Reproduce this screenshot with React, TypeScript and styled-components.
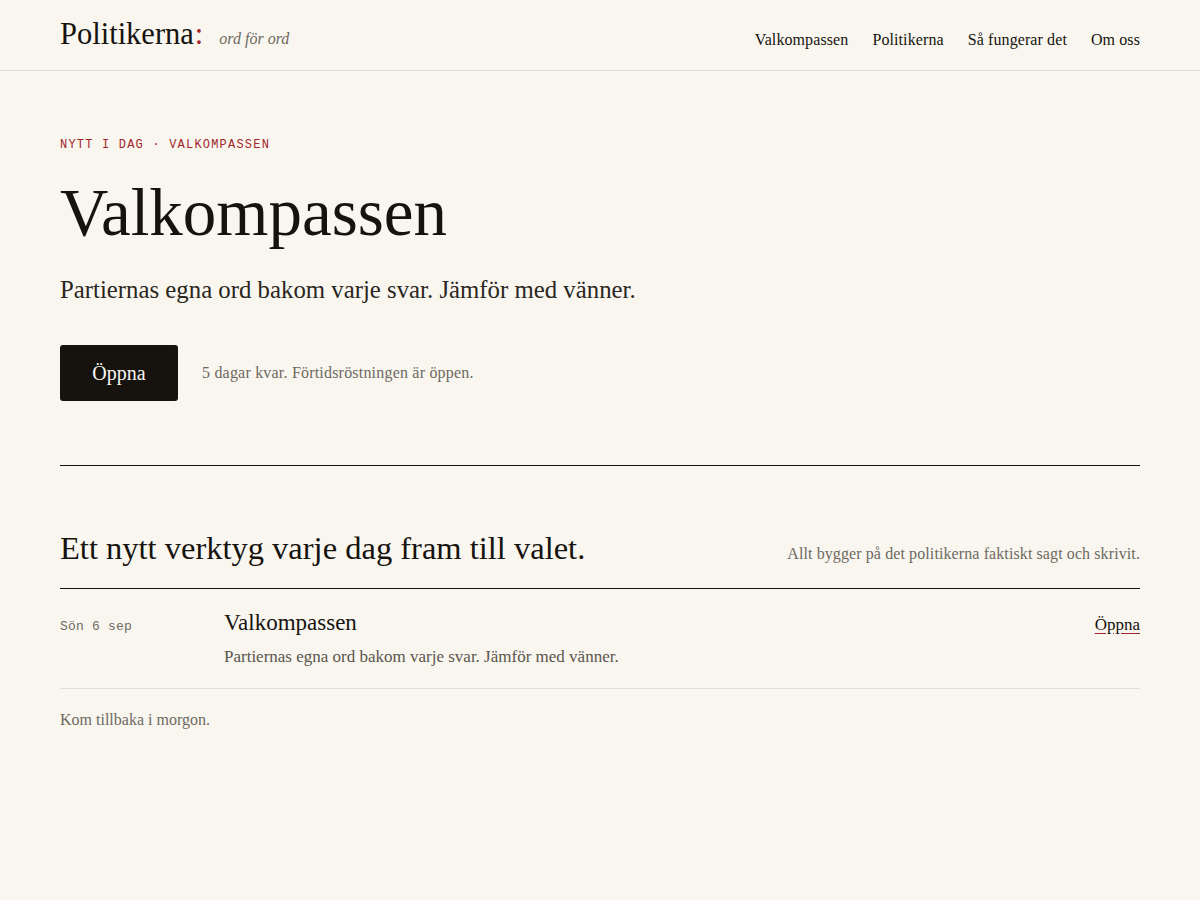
import React from 'react';
import styled, { createGlobalStyle } from 'styled-components';

const serif = `'Liberation Serif', 'Times New Roman', serif`;
const mono = `'Liberation Mono', 'DejaVu Sans Mono', monospace`;

const GlobalStyle = createGlobalStyle`
  * { box-sizing: border-box; }
  html, body {
    margin: 0;
    padding: 0;
    background: #f9f6f0;
    color: #16130e;
    font-family: ${serif};
  }
`;

const tools = [
  {
    date: 'Sön 6 sep',
    title: 'Valkompassen',
    desc: 'Partiernas egna ord bakom varje svar. Jämför med vänner.',
  },
];

const App = () => {
  return (
    <>
      <GlobalStyle />
      <Header>
        <HeaderInner>
          <Brand>
            <Logo>
              Politikerna<Colon>:</Colon>
            </Logo>
            <Tagline>ord för ord</Tagline>
          </Brand>
          <Nav>
            <NavLink href="#">Valkompassen</NavLink>
            <NavLink href="#">Politikerna</NavLink>
            <NavLink href="#">Så fungerar det</NavLink>
            <NavLink href="#">Om oss</NavLink>
          </Nav>
        </HeaderInner>
      </Header>

      <Main>
        <Hero>
          <Eyebrow>Nytt i dag · Valkompassen</Eyebrow>
          <Title>Valkompassen</Title>
          <Lead>Partiernas egna ord bakom varje svar. Jämför med vänner.</Lead>
          <Actions>
            <PrimaryButton>Öppna</PrimaryButton>
            <Note>5 dagar kvar. Förtidsröstningen är öppen.</Note>
          </Actions>
        </Hero>

        <Section>
          <SectionHead>
            <SectionTitle>Ett nytt verktyg varje dag fram till valet.</SectionTitle>
            <SectionAside>Allt bygger på det politikerna faktiskt sagt och skrivit.</SectionAside>
          </SectionHead>
          <List>
            {tools.map((tool) => (
              <Row key={tool.title}>
                <RowDate>{tool.date}</RowDate>
                <RowBody>
                  <RowTitle>{tool.title}</RowTitle>
                  <RowDesc>{tool.desc}</RowDesc>
                </RowBody>
                <RowLink href="#">Öppna</RowLink>
              </Row>
            ))}
          </List>
          <Footnote>Kom tillbaka i morgon.</Footnote>
        </Section>
      </Main>
    </>
  );
};

export default App;

const Header = styled.header`
  border-bottom: 1px solid #e2ddd3;
`;

const HeaderInner = styled.div`
  max-width: 1080px;
  height: 70px;
  margin: 0 auto;
  display: flex;
  align-items: center;
  justify-content: space-between;
`;

const Brand = styled.div`
  display: flex;
  align-items: baseline;
  gap: 16px;
  margin-top: -1px;
`;

const Logo = styled.span`
  font-size: 30.5px;
  color: #16130e;
`;

const Colon = styled.span`
  color: #a3262a;
  margin-left: 1px;
`;

const Tagline = styled.span`
  font-size: 16px;
  font-style: italic;
  color: #6e6960;
`;

const Nav = styled.nav`
  display: flex;
  gap: 24px;
  margin-top: 10px;
`;

const NavLink = styled.a`
  font-size: 16px;
  letter-spacing: 0.1px;
  color: #16130e;
  text-decoration: none;
`;

const Main = styled.main`
  max-width: 1080px;
  margin: 0 auto;
`;

const Hero = styled.section`
  padding: 66px 0 64px;
  border-bottom: 1px solid #16130e;
`;

const Eyebrow = styled.div`
  font-family: ${mono};
  font-size: 12px;
  letter-spacing: 0.1em;
  text-transform: uppercase;
  color: #a3262a;
  line-height: 16px;
`;

const Title = styled.h1`
  margin: 23px 0 0;
  font-weight: 400;
  font-size: 67px;
  line-height: 72px;
  color: #16130e;
`;

const Lead = styled.p`
  margin: 26px 0 0;
  font-size: 24.8px;
  line-height: 32px;
  color: #2a2620;
`;

const Actions = styled.div`
  margin-top: 39px;
  display: flex;
  align-items: center;
  gap: 24px;
`;

const PrimaryButton = styled.button`
  width: 118px;
  height: 56px;
  border: none;
  border-radius: 3px;
  background: #16130e;
  color: #f9f6f0;
  font-family: ${serif};
  font-size: 20px;
  cursor: pointer;
`;

const Note = styled.span`
  font-size: 16px;
  letter-spacing: 0.2px;
  color: #6e6960;
`;

const Section = styled.section`
  padding-top: 62px;
`;

const SectionHead = styled.div`
  display: flex;
  align-items: baseline;
  justify-content: space-between;
  padding-bottom: 20px;
  border-bottom: 1px solid #16130e;
`;

const SectionTitle = styled.h2`
  margin: 0;
  font-weight: 400;
  font-size: 32.5px;
  line-height: 40px;
  color: #16130e;
`;

const SectionAside = styled.span`
  font-size: 16px;
  letter-spacing: 0.1px;
  color: #6e6960;
`;

const List = styled.div``;

const Row = styled.div`
  display: grid;
  grid-template-columns: 164px 1fr auto;
  align-items: baseline;
  padding: 20px 0 20px;
  border-bottom: 1px solid #e2ddd3;
`;

const RowDate = styled.span`
  font-family: ${mono};
  font-size: 13px;
  letter-spacing: 0.2px;
  color: #6e6960;
`;

const RowBody = styled.div`
  display: flex;
  flex-direction: column;
  gap: 9px;
`;

const RowTitle = styled.span`
  font-size: 23px;
  line-height: 28px;
  color: #16130e;
`;

const RowDesc = styled.span`
  font-size: 17px;
  line-height: 22px;
  color: #5a554c;
`;

const RowLink = styled.a`
  font-size: 17px;
  color: #16130e;
  text-decoration: underline;
  text-decoration-color: #a3262a;
  text-underline-offset: 3px;
`;

const Footnote = styled.p`
  margin: 22px 0 0;
  font-size: 16px;
  color: #6e6960;
`;
